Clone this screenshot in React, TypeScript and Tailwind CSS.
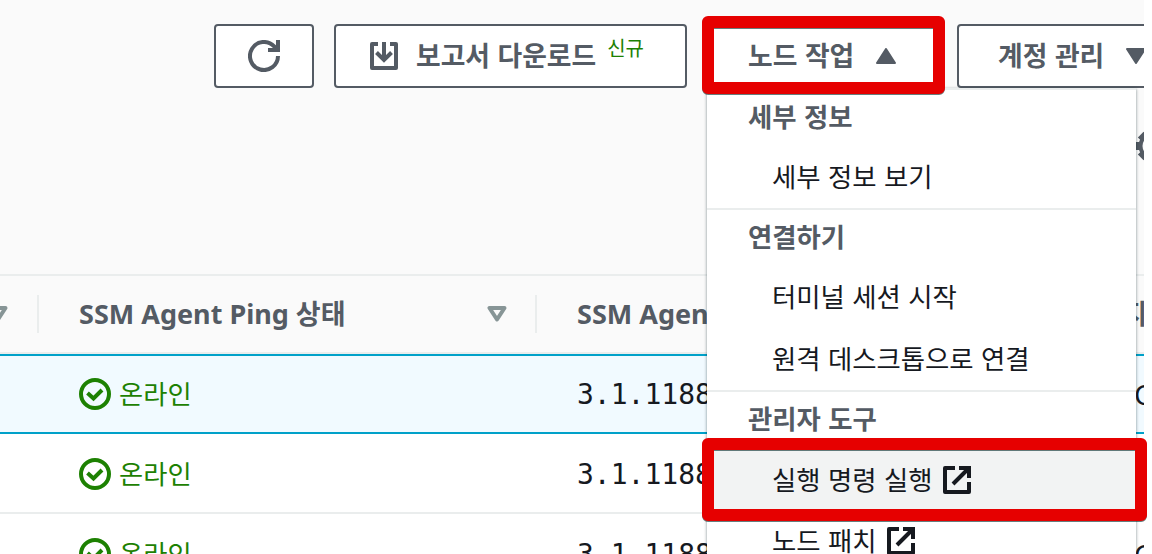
import type { ReactNode } from "react";

const uiFont = "font-['Noto_Sans','Noto_Sans_CJK_KR',sans-serif]";
const koFont = "font-['Noto_Sans_CJK_KR',sans-serif]";

function RefreshIcon() {
  return (
    <svg className="h-8 w-8" viewBox="0 0 16 16" fill="none" stroke="currentColor" strokeWidth="2">
      <path d="M15 8a7 7 0 1 1-1.9-4.800L14.500 5" />
      <path d="M10 5h5V0" />
    </svg>
  );
}

function DownloadIcon() {
  return (
    <svg className="h-8 w-8" viewBox="0 0 32 32" fill="none" stroke="currentColor" strokeWidth="4">
      <path d="M10 4H4v24h24V4h-6" strokeLinejoin="round" />
      <path d="M16 2v18M8.500 12.500l7.500 7.500 7.500-7.500" />
    </svg>
  );
}

function ExternalIcon() {
  return (
    <svg className="h-8 w-8 shrink-0" viewBox="0 0 32 32" fill="none" stroke="currentColor" strokeWidth="4">
      <path d="M14 4H4v24h24V18" strokeLinejoin="round" />
      <path d="M18 4h10v10M28 4L12 20" />
    </svg>
  );
}

function CheckIcon() {
  return (
    <svg className="h-8 w-8" viewBox="0 0 32 32" fill="none" stroke="currentColor" strokeWidth="4">
      <circle cx="16" cy="16" r="14" />
      <path d="M8.500 15l6 5.500 8.500-8.500" />
    </svg>
  );
}

function Caret({ up = false }: { up?: boolean }) {
  return (
    <svg
      className={up ? "h-4 w-5 shrink-0 rotate-180" : "h-4 w-5 shrink-0"}
      viewBox="0 0 20 16"
      fill="currentColor"
      stroke="currentColor"
      strokeWidth="2"
      strokeLinejoin="round"
    >
      <path d="M1 1h18l-9 14z" />
    </svg>
  );
}

function SortIcon() {
  return (
    <svg
      className="h-4 w-5 shrink-0 text-[#879596]"
      viewBox="0 0 20 16"
      fill="none"
      stroke="currentColor"
      strokeWidth="4"
      strokeLinejoin="round"
    >
      <path d="M2.500 2h15L10 13.500z" />
    </svg>
  );
}

function Gear() {
  return (
    <svg className="h-8 w-8 shrink-0" viewBox="0 0 32 32" fill="none" stroke="currentColor">
      <circle cx="16" cy="16" r="11.500" strokeWidth="4" />
      <path strokeWidth="8" d="M16 0v5M16 27v5M0 16h5M27 16h5M4.700 4.700l3 3M24.300 24.300l3 3M4.700 27.300l3-3M24.300 7.700l3-3" />
    </svg>
  );
}

function HeaderCell({ children }: { children?: ReactNode }) {
  return (
    <div className="flex h-[38px] w-[498px] shrink-0 items-center justify-between border-r-2 border-[#eaeded] pr-7 pl-10">
      <span className="text-[27px] leading-[38px] font-bold whitespace-nowrap">{children}</span>
      <SortIcon />
    </div>
  );
}

function Row({ selected = false }: { selected?: boolean }) {
  return (
    <div
      className={
        selected
          ? "flex h-20 shrink-0 items-center border-y-2 border-[#00a1c9] bg-[#f1faff]"
          : "flex h-20 shrink-0 items-center border-b-2 border-[#eaeded] bg-white pt-0.5"
      }
    >
      <div className="flex w-[577px] shrink-0 items-center gap-2 pl-[79px] text-[#1d8102]">
        <CheckIcon />
        <span className={`${koFont} pb-[3px] text-[26.3px] leading-8`}>온라인</span>
      </div>
      <div className="w-[557px] shrink-0 pt-px font-['DejaVu_Sans_Mono',monospace] text-[28px] leading-8 text-[#16191f]">
        3.1.1188.0
      </div>
      <div className={`${uiFont} shrink-0 text-[28px] leading-8 text-[#16191f]`}>C</div>
    </div>
  );
}

function MenuHeading({ children }: { children: ReactNode }) {
  return <div className="flex h-[57px] items-center pb-[5px] pl-[41px] font-bold text-[#545b64]">{children}</div>;
}

function MenuItem({
  children,
  height = "h-[61px]",
  active = false,
  external = false,
}: {
  children: ReactNode;
  height?: string;
  active?: boolean;
  external?: boolean;
}) {
  return (
    <div className={`flex items-center gap-2 pl-[65px] text-[#16191f] ${height} ${active ? "bg-[#f2f3f3]" : ""}`}>
      <span className="pb-[3px]">{children}</span>
      {external && <ExternalIcon />}
    </div>
  );
}

function Menu() {
  return (
    <div
      className={`${koFont} absolute top-[88px] left-[707px] w-[429px] border-t-2 border-[#eaeded] bg-white text-[26.4px] leading-8 [word-spacing:1.500px] whitespace-nowrap shadow-[0_1px_3px_rgba(0,28,36,0.5)]`}
    >
      <MenuHeading>세부 정보</MenuHeading>
      <MenuItem>세부 정보 보기</MenuItem>
      <div className="h-0.5 bg-[#eaeded]" />
      <MenuHeading>연결하기</MenuHeading>
      <MenuItem>터미널 세션 시작</MenuItem>
      <MenuItem height="h-[62px]">원격 데스크톱으로 연결</MenuItem>
      <div className="h-0.5 bg-[#eaeded]" />
      <MenuHeading>관리자 도구</MenuHeading>
      <MenuItem height="h-[62px]" active external>
        실행 명령 실행
      </MenuItem>
      <MenuItem height="h-[60px]" external>
        노드 패치
      </MenuItem>
    </div>
  );
}

const button = "flex h-16 shrink-0 items-center rounded-[4px] border-2 border-[#545b64] bg-white";

export default function App() {
  return (
    <div className="relative h-[554px] w-[1152px] overflow-hidden bg-white">
      <div className={`${uiFont} flex h-full w-[1144px] flex-col overflow-hidden bg-white text-[#545b64]`}>
        <div className="h-[276px] shrink-0 border-b-2 border-[#eaeded] bg-[#fafafa]">
          <div
            className={`${koFont} flex gap-5 pt-6 pl-[214px] text-[26.8px] leading-8 font-bold whitespace-nowrap [word-spacing:1.500px]`}
          >
            <div className={`${button} w-[100px] justify-center`}>
              <RefreshIcon />
            </div>
            <div className={`${button} w-[353px] pl-8`}>
              <DownloadIcon />
              <span className="ml-4 pb-[3px]">보고서 다운로드</span>
              <span className="mb-4 ml-[11px] text-[20px] leading-6 font-normal text-[#1d8102]">신규</span>
            </div>
            <div className={`${button} w-[230px] gap-[22px] pl-[39px]`}>
              <span className="pb-[3px]">노드 작업</span>
              <Caret up />
            </div>
            <div className={`${button} w-[240px] gap-[22px] pl-[39px]`}>
              <span className="pb-[3px]">계정 관리</span>
              <Caret />
            </div>
          </div>
          <div className="mt-[42px] ml-[1136px] w-8">
            <Gear />
          </div>
        </div>
        <div className="flex h-[78px] shrink-0 items-center border-b-2 border-[#eaeded] bg-[#fafafa]">
          <div className="flex h-[38px] w-[39px] shrink-0 items-center justify-end border-r-2 border-[#eaeded] pr-[29px]">
            <SortIcon />
          </div>
          <HeaderCell>SSM Agent Ping 상태</HeaderCell>
          <HeaderCell>SSM Agent 버전</HeaderCell>
          <div className="flex w-[112px] shrink-0 justify-end text-[27px] leading-[38px] font-bold whitespace-nowrap">
            이미지
          </div>
        </div>
        <Row selected />
        <Row />
        <Row />
      </div>
      <Menu />
      <div className="absolute top-4 left-[702px] h-[78px] w-[243px] rounded-[6px] border-[12px] border-[#e60000] drop-shadow-[0_1px_0.500px_rgba(0,40,40,0.6)]" />
      <div className="absolute top-[438px] left-[702px] h-[83px] w-[445px] rounded-[6px] border-[12px] border-[#e60000] drop-shadow-[0_1px_0.500px_rgba(0,40,40,0.6)]" />
    </div>
  );
}
